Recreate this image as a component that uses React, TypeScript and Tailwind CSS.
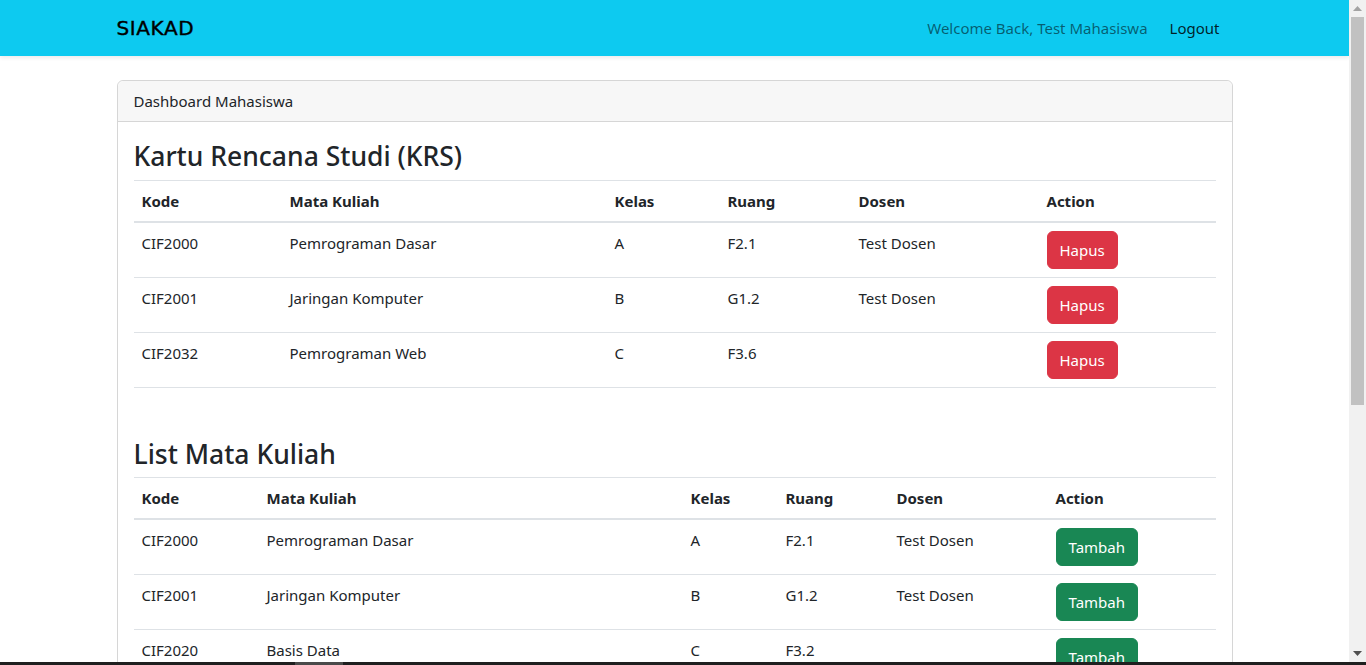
import React from "react";

const font = { fontFamily: '"Noto Sans", "Open Sans", sans-serif' };

type Row = { kode: string; mk: string; kelas: string; ruang: string; dosen: string };

const krs: Row[] = [
  { kode: "CIF2000", mk: "Pemrograman Dasar", kelas: "A", ruang: "F2.1", dosen: "Test Dosen" },
  { kode: "CIF2001", mk: "Jaringan Komputer", kelas: "B", ruang: "G1.2", dosen: "Test Dosen" },
  { kode: "CIF2032", mk: "Pemrograman Web", kelas: "C", ruang: "F3.6", dosen: "" },
];

const list: Row[] = [
  { kode: "CIF2000", mk: "Pemrograman Dasar", kelas: "A", ruang: "F2.1", dosen: "Test Dosen" },
  { kode: "CIF2001", mk: "Jaringan Komputer", kelas: "B", ruang: "G1.2", dosen: "Test Dosen" },
  { kode: "CIF2020", mk: "Basis Data", kelas: "C", ruang: "F3.2", dosen: "" },
];

function DataTable({
  rows,
  widths,
  action,
}: {
  rows: Row[];
  widths: string[];
  action: "hapus" | "tambah";
}) {
  const heads = ["Kode", "Mata Kuliah", "Kelas", "Ruang", "Dosen", "Action"];
  return (
    <table className="w-full table-fixed border-collapse border-t border-[#dee2e6] text-[15px] text-[#212529]">
      <colgroup>
        {widths.map((w, i) => (
          <col key={i} style={{ width: w }} />
        ))}
      </colgroup>
      <thead>
        <tr className="border-b-2 border-[#dee2e6]">
          {heads.map((h) => (
            <th key={h} className="px-2 py-2 text-left align-bottom leading-6 font-bold">
              {h}
            </th>
          ))}
        </tr>
      </thead>
      <tbody>
        {rows.map((r) => (
          <tr key={r.kode} className="border-b border-[#dee2e6]">
            <td className="px-2 py-2 align-top leading-6">{r.kode}</td>
            <td className="px-2 py-2 align-top leading-6">{r.mk}</td>
            <td className="px-2 py-2 align-top leading-6">{r.kelas}</td>
            <td className="px-2 py-2 align-top leading-6">{r.ruang}</td>
            <td className="px-2 py-2 align-top leading-6">{r.dosen}</td>
            <td className="px-2 py-2 align-top leading-6">
              {action === "hapus" ? (
                <button className="rounded-[6px] border border-[#dc3545] bg-[#dc3545] px-3 py-1.5 text-[15px] leading-6 text-white">
                  Hapus
                </button>
              ) : (
                <button className="rounded-[6px] border border-[#198754] bg-[#198754] px-3 py-1.5 text-[15px] leading-6 text-white">
                  Tambah
                </button>
              )}
            </td>
          </tr>
        ))}
      </tbody>
    </table>
  );
}

function Scrollbar() {
  return (
    <div className="flex w-[17px] shrink-0 flex-col bg-[#f1f1f1]">
      <div className="flex h-[17px] items-center justify-center">
        <svg width="9" height="5" viewBox="0 0 9 5">
          <polygon points="0,5 4.5,0 9,5" fill="#a3a3a3" />
        </svg>
      </div>
      <div className="flex-1 px-[2px]">
        <div className="h-[388px] bg-[#c1c1c1]" />
      </div>
      <div className="flex h-[17px] items-center justify-center">
        <svg width="9" height="5" viewBox="0 0 9 5">
          <polygon points="0,0 4.5,5 9,0" fill="#505050" />
        </svg>
      </div>
    </div>
  );
}

export default function App() {
  return (
    <div className="flex h-[665px] w-[1366px] flex-col overflow-hidden bg-white" style={font}>
      <div className="flex min-h-0 flex-1">
        <div className="min-w-0 flex-1 overflow-hidden">
          <nav className="relative z-10 h-[56px] bg-[#0dcaf0] shadow-[0_2px_4px_rgba(0,0,0,0.08)]">
            <div className="mx-auto flex h-full w-[1116px] items-center justify-between">
              <span
                className="text-[20px] font-medium tracking-[0.6px] text-black [-webkit-text-stroke:0.4px_black]"
                style={{ fontFamily: '"DejaVu Sans", sans-serif' }}
              >
                SIAKAD
              </span>
              <div className="flex items-center pr-[13px] text-[15px] leading-6">
                <span className="text-[rgba(0,0,0,0.55)]">Welcome Back, Test Mahasiswa</span>
                <span className="ml-[22px] text-[rgba(0,0,0,0.85)]">Logout</span>
              </div>
            </div>
          </nav>
          <div className="mx-auto mt-6 w-[1116px]">
            <div className="rounded-[6px] border border-[#d6d6d6]">
              <div className="rounded-t-[6px] border-b border-[#d6d6d6] bg-[#f7f7f7] px-4 py-2 text-[15px] leading-6 text-[#212529]">
                Dashboard Mahasiswa
              </div>
              <div className="p-4 text-[#212529]">
                <h3 className="mb-[6px] pt-[2px] text-[26.5px] leading-[33.6px] font-medium">
                  Kartu Rencana Studi (KRS)
                </h3>
                <DataTable
                  rows={krs}
                  widths={["148px", "325px", "113px", "131px", "188px", "177px"]}
                  action="hapus"
                />
                <h3 className="mt-[48px] mb-[6px] pt-[2px] text-[26.5px] leading-[33.6px] font-medium">
                  List Mata Kuliah
                </h3>
                <DataTable
                  rows={list}
                  widths={["125px", "424px", "95px", "111px", "159px", "168px"]}
                  action="tambah"
                />
              </div>
            </div>
          </div>
        </div>
        <Scrollbar />
      </div>
      <div className="flex h-[3px] shrink-0 bg-[#1f1f1f]">
        <div className="ml-[295px] h-full w-[48px] bg-[#4a4a4a]" />
      </div>
    </div>
  );
}
